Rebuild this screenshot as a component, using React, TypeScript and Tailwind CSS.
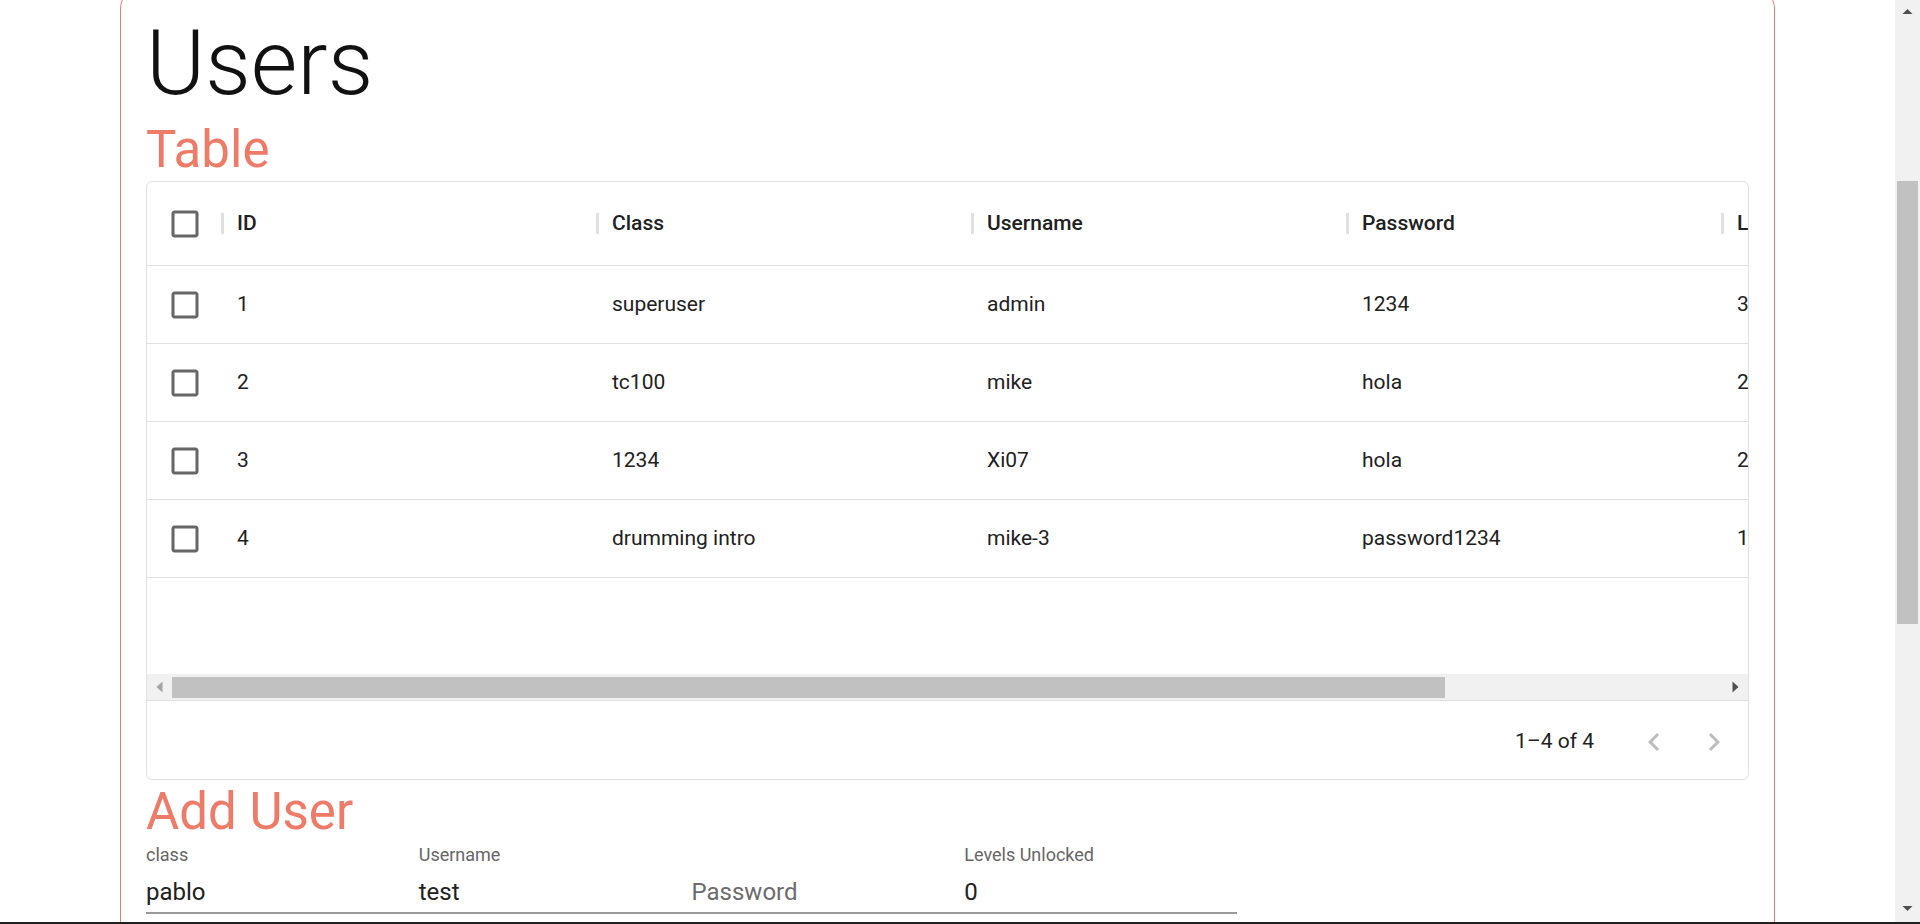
import React from "react";

type User = {
  id: number;
  cls: string;
  username: string;
  password: string;
  levels: number;
};

const users: User[] = [
  { id: 1, cls: "superuser", username: "admin", password: "1234", levels: 3 },
  { id: 2, cls: "tc100", username: "mike", password: "hola", levels: 2 },
  { id: 3, cls: "1234", username: "Xi07", password: "hola", levels: 2 },
  { id: 4, cls: "drumming intro", username: "mike-3", password: "password1234", levels: 1 },
];

const columns = ["ID", "Class", "Username", "Password", "Levels Unlocked"];

const CheckboxIcon = () => (
  <svg viewBox="0 0 24 24" className="w-[36px] h-[36px] fill-[#666666]">
    <path d="M19 5v14H5V5h14m0-2H5c-1.11 0-2 .9-2 2v14c0 1.1.89 2 2 2h14c1.1 0 2-.9 2-2V5c0-1.1-.9-2-2-2z" />
  </svg>
);

const HeaderRow = () => (
  <div className="flex w-max h-[84px] items-center border-b border-[#e0e0e0]">
    <div className="w-[73.5px] shrink-0 pl-[20px] flex items-center">
      <CheckboxIcon />
    </div>
    {columns.map((col) => (
      <div key={col} className="flex items-center shrink-0">
        <div className="w-[3px] h-[21px] bg-[#e0e0e0]" />
        <div className="w-[372px] pl-[13.5px] text-[21px] font-medium text-[#212121] whitespace-nowrap">
          {col}
        </div>
      </div>
    ))}
  </div>
);

const BodyRow = ({ user }: { user: User }) => {
  const cells = [user.id, user.cls, user.username, user.password, user.levels];
  return (
    <div className="flex w-max h-[78px] items-center border-b border-[#e0e0e0]">
      <div className="w-[75px] shrink-0 pl-[20px] flex items-center">
        <CheckboxIcon />
      </div>
      {cells.map((c, i) => (
        <div key={i} className="w-[375px] shrink-0 pl-[15px] text-[21px] text-[#212121] whitespace-nowrap">
          {c}
        </div>
      ))}
    </div>
  );
};

const HScrollbar = () => (
  <div className="flex h-[26px] items-center bg-[#f1f1f1]">
    <div className="w-[25px] h-[26px] shrink-0">
      <svg viewBox="0 0 25 26" className="w-[25px] h-[26px]">
        <polygon points="15.5,7.5 9.5,13 15.5,18.5" fill="#a3a3a3" />
      </svg>
    </div>
    <div className="w-[1273px] h-[21px] bg-[#c1c1c1] shrink-0" />
    <div className="flex-1" />
    <div className="w-[25px] h-[26px] shrink-0">
      <svg viewBox="0 0 25 26" className="w-[25px] h-[26px]">
        <polygon points="9.5,7.5 15.5,13 9.5,18.5" fill="#505050" />
      </svg>
    </div>
  </div>
);

const Pagination = () => (
  <div className="flex h-[79px] items-center justify-end border-t border-[#e0e0e0] pr-[4px] pt-[3px]">
    <span className="text-[21px] text-[#212121]">1–4 of 4</span>
    <div className="flex ml-[30px]">
      <button className="w-[60px] h-[60px] flex items-center justify-center" disabled>
        <svg viewBox="0 0 24 24" className="w-[36px] h-[36px] fill-[#bdbdbd]">
          <path d="M15.41 16.59 10.83 12l4.58-4.59L14 6l-6 6 6 6 1.41-1.41z" />
        </svg>
      </button>
      <button className="w-[60px] h-[60px] flex items-center justify-center" disabled>
        <svg viewBox="0 0 24 24" className="w-[36px] h-[36px] fill-[#bdbdbd]">
          <path d="M8.59 16.59 13.17 12 8.59 7.41 10 6l6 6-6 6-1.41-1.41z" />
        </svg>
      </button>
    </div>
  </div>
);

const UsersTable = () => (
  <div className="border border-[#e0e0e0] rounded-[6px] overflow-hidden">
    <div className="overflow-hidden">
      <HeaderRow />
      {users.map((u) => (
        <BodyRow key={u.id} user={u} />
      ))}
      <div className="h-[96px]" />
    </div>
    <HScrollbar />
    <Pagination />
  </div>
);

const Field = ({ label, value, placeholder }: { label?: string; value?: string; placeholder?: string }) => (
  <div className="w-[272.75px] shrink-0 flex flex-col">
    <div className="mt-[3px] h-[18px] text-[18px] leading-[18px] text-[#666666] whitespace-nowrap">{label}</div>
    <div className="mt-[3px] h-[47px] border-b-[2px] border-[#9a9a9a] flex items-center pt-[4px]">
      {value !== undefined ? (
        <span className="text-[24px] text-[#212121]">{value}</span>
      ) : (
        <span className="text-[24px] text-[#6b6b6b]">{placeholder}</span>
      )}
    </div>
  </div>
);

const WindowScrollbar = () => (
  <div className="w-[25px] h-[922px] bg-[#f1f1f1] flex flex-col shrink-0">
    <div className="h-[25px]">
      <svg viewBox="0 0 25 25" className="w-[25px] h-[25px]">
        <polygon points="7.5,14 12.5,9 17.5,14" fill="#505050" />
      </svg>
    </div>
    <div className="h-[156px]" />
    <div className="h-[443px] mx-[2px] bg-[#c1c1c1]" />
    <div className="flex-1" />
    <div className="h-[25px]">
      <svg viewBox="0 0 25 25" className="w-[25px] h-[25px]">
        <polygon points="7.5,9 12.5,14 17.5,9" fill="#505050" />
      </svg>
    </div>
  </div>
);

export default function App() {
  return (
    <div className="h-[924px] w-full overflow-hidden flex flex-col bg-white font-['Roboto',sans-serif]">
      <div className="flex h-[922px]">
        <main className="flex-1 overflow-hidden">
          <section className="w-[1655px] mx-auto mt-[-15px] border border-[#ee7b6b] rounded-[24px] px-[25px] pt-[24px] pb-[120px]">
            <h2 className="text-[90px] font-light leading-[108px] text-[#111111]">Users</h2>
            <h4 className="text-[51px] leading-[63px] text-[#ee7a68]">Table</h4>
            <UsersTable />
            <h4 className="text-[51px] leading-[63px] text-[#ee7a68]">Add User</h4>
            <div className="flex">
              <Field label="class" value="pablo" />
              <Field label="Username" value="test" />
              <Field placeholder="Password" />
              <Field label="Levels Unlocked" value="0" />
            </div>
          </section>
        </main>
        <WindowScrollbar />
      </div>
      <div className="h-[2px] bg-[#202020]" />
    </div>
  );
}
